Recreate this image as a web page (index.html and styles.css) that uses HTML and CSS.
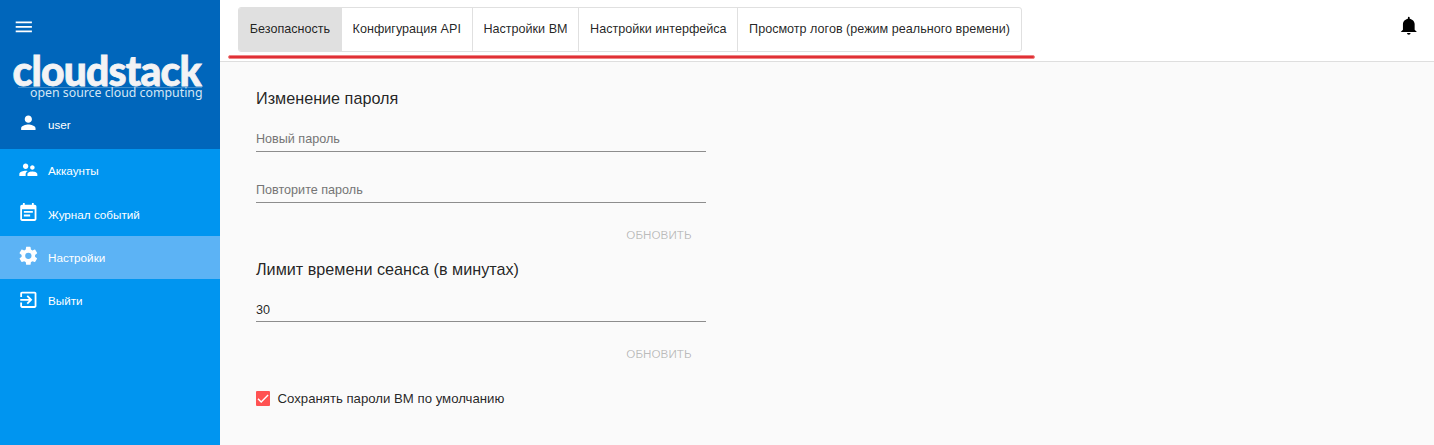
FILE: index.html
```
<!DOCTYPE html>
<html lang="ru">
<head>
<meta charset="utf-8">
<title>CloudStack — Настройки</title>
<link rel="stylesheet" href="styles.css">
</head>
<body>
<div class="app">
  <aside class="sidebar">
    <div class="brand">
      <svg class="icon menu" viewBox="0 0 24 24"><path d="M3 18h18v-2H3v2zm0-5h18v-2H3v2zm0-7v2h18V6H3z"/></svg>
      <svg class="logo" viewBox="0 -12 220 68">
        <path class="logo-rule" d="M18 37.5H202"/>
        <text class="logo-name" x="12.500" y="35.500" textLength="188.500" lengthAdjust="spacingAndGlyphs">cloudstack</text>
        <text class="logo-tag" x="30" y="47" textLength="172.500" lengthAdjust="spacingAndGlyphs">open source cloud computing</text>
      </svg>
      <div class="user">
        <svg class="icon" viewBox="-.6 0 24 24"><path d="M12 12c2.210 0 4-1.790 4-4s-1.790-4-4-4-4 1.790-4 4 1.790 4 4 4zm0 2c-2.670 0-8 1.340-8 4v2h16v-2c0-2.660-5.330-4-8-4z"/></svg>
        <span>user</span>
      </div>
    </div>
    <nav class="nav">
      <a class="nav-item first"><svg class="icon" viewBox="-.6 0 24 24"><path d="M16.500 12c1.380 0 2.490-1.120 2.490-2.500S17.880 7 16.500 7C15.120 7 14 8.120 14 9.500s1.120 2.500 2.500 2.500zM9 11c1.660 0 2.990-1.340 2.990-3S10.660 5 9 5C7.340 5 6 6.340 6 8s1.340 3 3 3zm7.500 3c-1.830 0-5.500.92-5.500 2.750V19h11v-2.250c0-1.830-3.670-2.750-5.500-2.750zM9 13c-2.330 0-7 1.170-7 3.500V19h7v-2.250c0-.85.33-2.340 2.370-3.470C10.500 13.100 9.660 13 9 13z"/></svg><span>Аккаунты</span></a>
      <a class="nav-item"><svg class="icon" viewBox="-.6 0 24 24"><path d="M17 10H7v2h10v-2zm2-7h-1V1h-2v2H8V1H6v2H5c-1.110 0-1.990.9-1.990 2L3 19c0 1.100.89 2 2 2h14c1.100 0 2-.9 2-2V5c0-1.100-.9-2-2-2zm0 16H5V8h14v11zm-5-5H7v2h7v-2z"/></svg><span>Журнал событий</span></a>
      <a class="nav-item active"><svg class="icon" viewBox="-.6 0 24 24"><path d="M12 15.500A3.500 3.500 0 0 1 8.500 12 3.500 3.500 0 0 1 12 8.500a3.500 3.500 0 0 1 3.500 3.500 3.500 3.500 0 0 1-3.500 3.500m7.430-2.530c.04-.32.07-.64.07-.97 0-.33-.03-.66-.07-1l2.110-1.630c.19-.15.24-.42.12-.64l-2-3.460c-.12-.22-.39-.31-.61-.22l-2.490 1c-.52-.39-1.060-.73-1.690-.98l-.37-2.650A.506.506 0 0 0 14 2h-4c-.25 0-.46.18-.5.420l-.37 2.650c-.63.250-1.170.590-1.690.980l-2.490-1c-.22-.09-.49 0-.61.220l-2 3.460c-.13.220-.07.490.12.640L4.570 11c-.04.340-.07.670-.07 1 0 .330.030.650.070.970l-2.110 1.660c-.19.150-.25.420-.12.640l2 3.460c.12.220.39.300.61.220l2.490-1.010c.52.400 1.060.740 1.690.990l.37 2.650c.04.240.25.420.5.420h4c.25 0 .46-.18.500-.42l.37-2.650c.63-.26 1.170-.59 1.690-.99l2.490 1.010c.22.080.49 0 .61-.22l2-3.460c.12-.22.07-.49-.12-.64l-2.110-1.660z"/></svg><span>Настройки</span></a>
      <a class="nav-item last"><svg class="icon" viewBox="-.6 0 24 24"><path d="M10.090 15.590L11.500 17l5-5-5-5-1.410 1.410L12.670 11H3v2h9.670l-2.580 2.590zM19 3H5c-1.110 0-2 .9-2 2v4h2V5h14v14H5v-4H3v4c0 1.100.89 2 2 2h14c1.100 0 2-.9 2-2V5c0-1.100-.9-2-2-2z"/></svg><span>Выйти</span></a>
    </nav>
  </aside>
  <div class="content">
    <header class="header">
      <div class="tabs">
        <button class="tab selected">Безопасность</button>
        <button class="tab">Конфигурация API</button>
        <button class="tab">Настройки ВМ</button>
        <button class="tab">Настройки интерфейса</button>
        <button class="tab">Просмотр логов (режим реального времени)</button>
      </div>
      <div class="underline"></div>
      <svg class="bell" viewBox="0 0 24 24"><path d="M14 20a2 2 0 0 1-2 2 2 2 0 0 1-2-2h4M12 2a1 1 0 0 1 1 1v1.080c2.840.48 5.500 2.940 5.500 5.920v6.500L21 19H3l2.500-2.500V10c0-2.980 2.660-5.440 5.500-5.920V3a1 1 0 0 1 1-1z"/></svg>
    </header>
    <main class="settings">
      <h3 class="title">Изменение пароля</h3>
      <div class="field placeholder">Новый пароль</div>
      <div class="field placeholder second">Повторите пароль</div>
      <button class="update" disabled>ОБНОВИТЬ</button>
      <h3 class="title session">Лимит времени сеанса (в минутах)</h3>
      <div class="field minutes">30</div>
      <button class="update" disabled>ОБНОВИТЬ</button>
      <div class="option">
        <svg class="checkbox" viewBox="0 0 14 15"><path d="M2 7.700L5.200 11 12.100 4"/></svg>
        <span>Сохранять пароли ВМ по умолчанию</span>
      </div>
    </main>
  </div>
</div>
</body>
</html>
```
FILE: styles.css
```
* { box-sizing: border-box; }
body {
  margin: 0;
  font-family: "Liberation Sans", Arial, sans-serif;
  font-size: 12.6px;
  color: rgba(0, 0, 0, .87);
  background: #fafafa;
}
button { font: inherit; color: inherit; border: 0; background: none; }
.app { display: flex; height: 445px; overflow: hidden; }
.sidebar { width: 220px; flex: none; background: #0095f0; color: #fff; font-size: 11.7px; }
.icon { width: 21.6px; height: 21.6px; fill: #fff; flex: none; }
.brand { height: 149px; background: #0066bb; padding-top: 16px; display: flex; flex-direction: column; }
.menu { margin-left: 13px; }
.logo { width: 220px; height: 68px; margin-top: .4px; flex: none; }
.logo-name { font: 900 41px Lato, sans-serif; letter-spacing: -.8px; fill: #f3f3f5; stroke: #f3f3f5; stroke-width: .8; }
.logo-tag { font: 12.500px "Noto Sans", sans-serif; fill: #d5e6f5; }
.logo-rule { stroke: #3c8bcb; stroke-width: 1; }
.user { display: flex; align-items: center; padding-left: 17px; gap: 9.4px; height: 38px; }
.user .icon, .nav-item .icon { margin-top: -4px; }
.nav-item { display: flex; align-items: center; gap: 9.4px; height: 43px; padding-left: 17px; }
.nav-item.first { margin-bottom: 1px; }
.nav-item.first .icon, .nav-item.last .icon { margin-top: -1px; }
.nav-item.active { background: #5cb3f5; }
.content { flex: 1; min-width: 0; }
.header {
  position: relative;
  height: 62px;
  padding: 7px 14.5px 0 18px;
  border-bottom: 1px solid #dedede;
  background: #fff;
  display: flex;
  justify-content: space-between;
}
.tabs { display: flex; height: 45px; border: 1px solid #e0e0e0; border-radius: 3px; overflow: hidden; }
.tab { padding: 0 10.74px 2px; white-space: nowrap; border-left: 1px solid #e0e0e0; }
.tab:first-child { border-left: 0; padding-left: 10.8px; }
.tab:last-child { padding-right: 11.1px; }
.tab.selected { background: #e0e0e0; }
.underline {
  position: absolute;
  left: 8px;
  top: 55px;
  width: 807px;
  height: 4px;
  border: 1px solid #ef8585;
  border-radius: 2px;
  background: #e03036;
}
.bell { width: 21.6px; height: 21.6px; margin-top: 7.5px; }
.settings { width: 486px; padding: 25px 0 0 36px; display: flex; flex-direction: column; }
.title { margin: 0; height: 22px; line-height: 22px; font-size: 16.2px; font-weight: 400; }
.field { height: 24px; margin-top: 19px; line-height: 20px; border-bottom: 1px solid #8d8d8d; padding-top: 1px; }
.field.second { margin-top: 27px; }
.field.minutes { height: 23px; }
.placeholder { color: #757575; }
.update { align-self: flex-end; margin: 15px 0 0; padding: 0 14.400px; height: 32px; font-size: 11.7px; color: rgba(0, 0, 0, .26); }
.session { margin-top: 8px; }
.option { display: flex; align-items: center; gap: 7.500px; margin-top: 20px; height: 18px; font-size: 13.2px; }
.checkbox { width: 14px; height: 15px; background: #ff5252; border-radius: 1px; flex: none; fill: none; stroke: #fff; stroke-width: 1.400; }
```
